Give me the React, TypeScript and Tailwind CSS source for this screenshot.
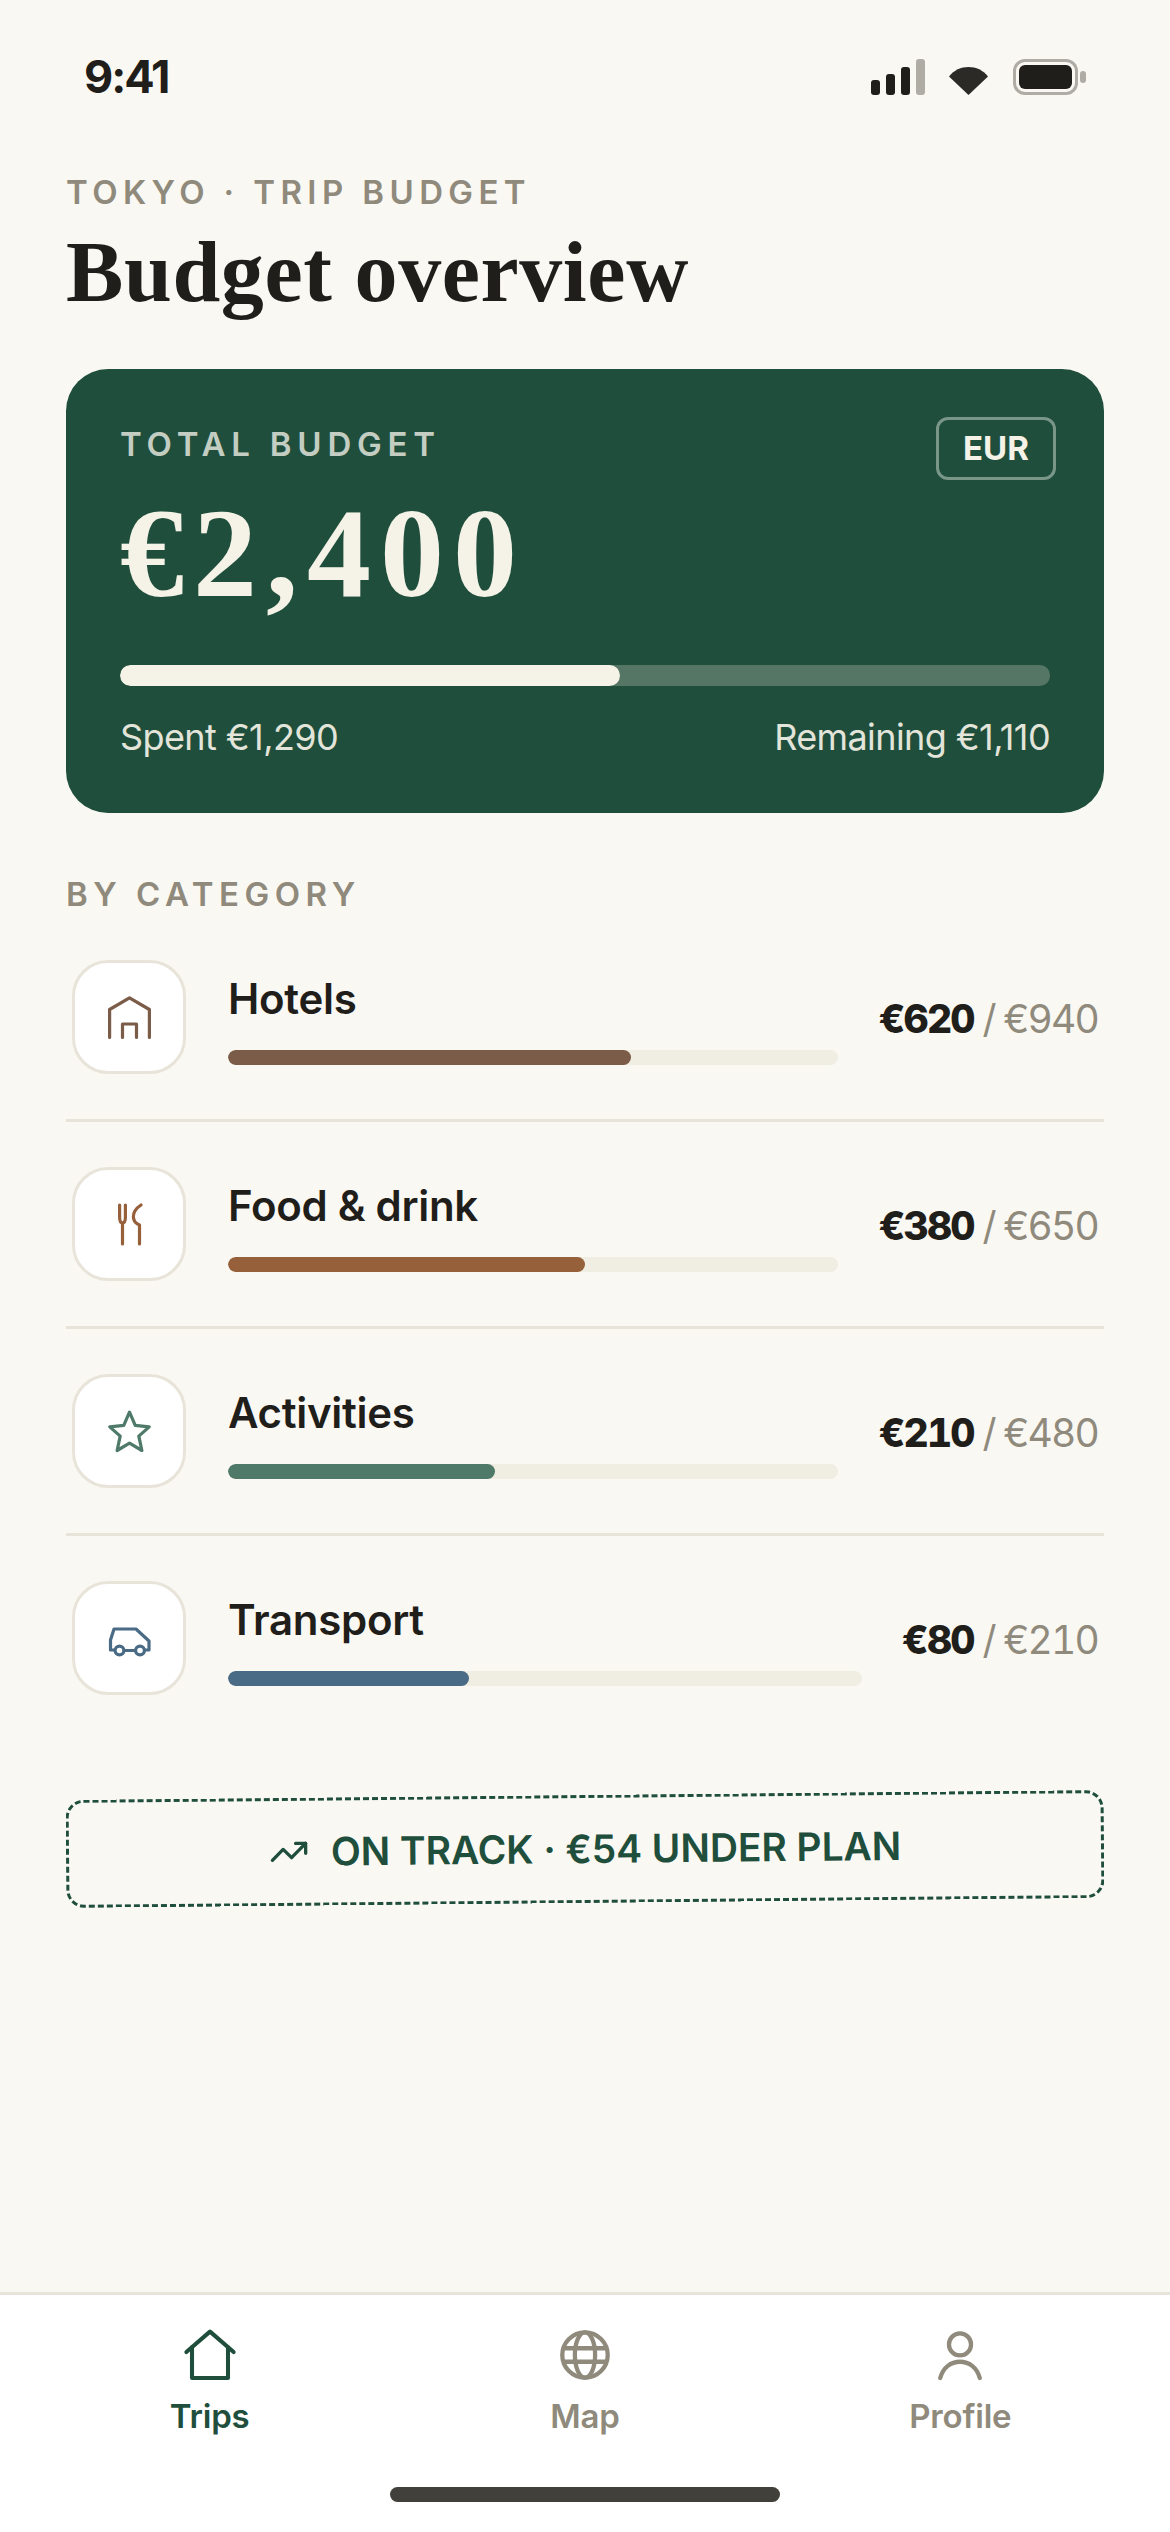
const sans = "font-['Inter','Liberation_Sans',sans-serif]";

const categories = [
  { name: 'Hotels', spent: 620, total: 940, color: 'bg-[#7a5c48]', icon: 'hotel' },
  { name: 'Food & drink', spent: 380, total: 650, color: 'bg-[#96603a]', icon: 'food' },
  { name: 'Activities', spent: 210, total: 480, color: 'bg-[#4f7a6a]', icon: 'star' },
  { name: 'Transport', spent: 80, total: 210, color: 'bg-[#4a6b85]', icon: 'car' },
];

function StatusIcons() {
  return (
    <div className="flex items-end">
      <svg width="54" height="36" viewBox="0 0 54 36" className="mr-[24px]">
        <rect x="0" y="21" width="9" height="15" rx="3" fill="#1f1e1a" />
        <rect x="15" y="15" width="9" height="21" rx="3" fill="#1f1e1a" />
        <rect x="30" y="8" width="9" height="28" rx="3" fill="#1f1e1a" />
        <rect x="45" y="0" width="9" height="36" rx="3" fill="#aeaca5" />
      </svg>
      <svg width="39" height="28" viewBox="0 0 39 28" className="mr-[25px]">
        <path d="M0 9.5C5 3 12 0 19.5 0S34 3 39 9.5L19.5 28Z" fill="#2b2a26" />
      </svg>
      <div className="w-[65px] h-[36px] rounded-[12px] border-[3px] border-[#aeaca5] p-[3px]">
        <div className="w-full h-full rounded-[6px] bg-[#1f1e1a]" />
      </div>
      <div className="w-[6px] h-[12px] rounded-[3px] bg-[#aeaca5] ml-[2px] mb-[12px]" />
    </div>
  );
}

function CategoryIcon({ kind }: { kind: string }) {
  if (kind === 'hotel') {
    return (
      <svg width="43" height="43" viewBox="0 0 43 43" fill="none" stroke="#7a5c48" strokeWidth="3.2" strokeLinecap="round" strokeLinejoin="round">
        <path d="M1.6 41.4V13.5L21.5 1.8 41.4 13.5V41.4" />
        <path d="M14.5 41.4V28H28.5V41.4" />
      </svg>
    );
  }
  if (kind === 'food') {
    return (
      <svg width="43" height="43" viewBox="0 0 43 43" fill="none" stroke="#96603a" strokeWidth="3.2" strokeLinecap="round" strokeLinejoin="round">
        <path d="M11.6 2V14C11.6 18 12.5 20 14.5 20C16.5 20 17.4 18 17.4 14V2" />
        <path d="M14.5 20V41" />
        <path d="M33 2C27 6 25 11 25.5 15C26 19 29 21 31.5 22V41" />
      </svg>
    );
  }
  if (kind === 'star') {
    return (
      <svg width="43" height="43" viewBox="0 0 24 24" fill="none" stroke="#4f7a6a" strokeWidth="1.8" strokeLinejoin="round">
        <path d="M12 1.2 15.2 8.6 23 9.4 17.2 14.6 18.9 22.6 12 18.5 5.1 22.6 6.8 14.6 1 9.4 8.8 8.6Z" />
      </svg>
    );
  }
  return (
    <svg width="43" height="43" viewBox="0 0 43 43" fill="none" stroke="#4a6b85" strokeWidth="3.2" strokeLinecap="round" strokeLinejoin="round">
      <path d="M6.5 33H2.5V23L6 12H28L41 24V33H37" />
      <path d="M16 33.5H27" />
      <circle cx="11.5" cy="33.5" r="4.4" />
      <circle cx="32" cy="33.5" r="4.4" />
    </svg>
  );
}

function CategoryRow({ c, last }: { c: (typeof categories)[number]; last: boolean }) {
  return (
    <div className={`flex items-center gap-[40px] px-[6px] py-[45px] ${last ? '' : 'border-b-[3px] border-[#e8e4da]'}`}>
      <div className="w-[114px] h-[114px] mr-[2px] shrink-0 flex items-center justify-center rounded-[36px] border-[3px] border-[#e8e4da] bg-white">
        <CategoryIcon kind={c.icon} />
      </div>
      <div className="flex-1">
        <div className="text-[42px] leading-[60px] font-semibold tracking-[-0.3px] text-[#1f1e1a]">{c.name}</div>
        <div className="mt-[21px] h-[15px] rounded-full bg-[#f0eee2] overflow-hidden">
          <div className={`h-full rounded-full ${c.color}`} style={{ width: `${(c.spent / c.total) * 100}%` }} />
        </div>
      </div>
      <div className="pt-[3px] text-[39px] leading-[48px] tracking-[-1.8px] tabular-nums text-[#8f8a7c] whitespace-nowrap">
        <span className="font-extrabold text-[#1f1e1a]">€{c.spent}</span> / €{c.total}
      </div>
    </div>
  );
}

function NavItem({ label, active, children }: { label: string; active?: boolean; children: React.ReactNode }) {
  return (
    <div className={`flex flex-col items-center gap-[15px] ${active ? 'text-[#1f4f3c]' : 'text-[#8f8a7c]'}`}>
      {children}
      <span className="text-[33px] leading-[39px] font-semibold tracking-[-0.2px]">{label}</span>
    </div>
  );
}

export default function App() {
  return (
    <div className={`${sans} w-[1170px] h-[2532px] bg-[#faf8f3] flex flex-col overflow-hidden`}>
      <div className="flex items-center justify-between px-[84px] pt-[50px]">
        <span className="text-[45px] leading-[54px] font-bold text-[#1f1e1a] tracking-[-2px]">9:41</span>
        <StatusIcons />
      </div>

      <div className="flex-1 px-[66px] pt-[67px]">
        <div className="text-[33px] leading-[42px] font-semibold tracking-[5.4px] text-[#8f8a7c]">TOKYO · TRIP BUDGET</div>
        <h1 className="font-['Liberation_Serif',serif] text-[86px] leading-[96px] font-bold tracking-[0.6px] text-[#1f1e1a] mt-[11px]">
          Budget overview
        </h1>

        <div className="mt-[49px] h-[444px] rounded-[42px] bg-[#1f4f3c] px-[54px] pt-[54px] relative">
          <div className="text-[33px] leading-[42px] font-semibold tracking-[5.8px] text-[#c3cdc2]">TOTAL BUDGET</div>
          <div className="absolute right-[48px] top-[48px] w-[120px] h-[63px] flex items-center justify-center rounded-[12px] border-[3px] border-[#7a9688] text-[33px] font-bold text-[#f5f2e7]">
            EUR
          </div>
          <div className="font-['Liberation_Serif',serif] text-[128px] leading-[144px] font-bold tracking-[9px] text-[#f5f2e7] mt-[16px]">
            €2,400
          </div>
          <div className="mt-[40px] h-[21px] rounded-[10px] bg-[#557565] overflow-hidden">
            <div className="h-full rounded-full bg-[#f5f2e7]" style={{ width: '53.75%' }} />
          </div>
          <div className="mt-[29px] flex justify-between text-[36px] leading-[45px] tracking-[-0.6px] text-[#e3e5da]">
            <span>Spent €1,290</span>
            <span>Remaining €1,110</span>
          </div>
        </div>

        <div className="mt-[60px] text-[33px] leading-[42px] font-semibold tracking-[5.5px] text-[#8f8a7c]">BY CATEGORY</div>

        <div>
          {categories.map((c, i) => (
            <CategoryRow key={c.name} c={c} last={i === categories.length - 1} />
          ))}
        </div>

        <div className="mt-[55px] h-[108px] flex items-center justify-center gap-[22px] rounded-[18px] border-[3px] border-dashed border-[#1f4f3c] rotate-[-0.55deg] text-[#1f4f3c]">
          <svg width="40" height="40" viewBox="0 0 24 24" fill="none" stroke="#1f4f3c" strokeWidth="2" strokeLinecap="round" strokeLinejoin="round">
            <polyline points="22 7 13.5 15.5 8.5 10.5 2 17" />
            <polyline points="16 7 22 7 22 13" />
          </svg>
          <span className="text-[39px] leading-[48px] font-semibold tracking-[-0.1px]">ON TRACK · €54 UNDER PLAN</span>
        </div>
      </div>

      <div className="h-[240px] shrink-0 bg-white border-t-[3px] border-[#e8e4da] px-[22px] pt-[33px] relative">
        <div className="grid grid-cols-3">
          <NavItem label="Trips" active>
            <svg width="54" height="54" viewBox="0 0 24 24" fill="none" stroke="currentColor" strokeWidth="1.8" strokeLinejoin="round" strokeLinecap="round">
              <path d="M1.5 10.7 12 1.6 22.5 10.7" />
              <path d="M4 8.6V22.2H20V8.6" />
            </svg>
          </NavItem>
          <NavItem label="Map">
            <svg width="54" height="54" viewBox="0 0 24 24" fill="none" stroke="currentColor" strokeWidth="1.9">
              <circle cx="12" cy="12" r="10.1" />
              <ellipse cx="12" cy="12" rx="4.5" ry="10.1" />
              <path d="M2.5 9H21.5M2.5 15H21.5" />
            </svg>
          </NavItem>
          <NavItem label="Profile">
            <svg width="54" height="54" viewBox="0 0 24 24" fill="none" stroke="currentColor" strokeWidth="1.9" strokeLinecap="round">
              <circle cx="12" cy="7.3" r="4.9" />
              <path d="M3.2 22.2C4.5 17.5 8 15 12 15S19.5 17.5 20.8 22.2" />
            </svg>
          </NavItem>
        </div>
        <div className="absolute left-[390px] bottom-[30px] w-[390px] h-[15px] rounded-full bg-[#42403b]" />
      </div>
    </div>
  );
}
